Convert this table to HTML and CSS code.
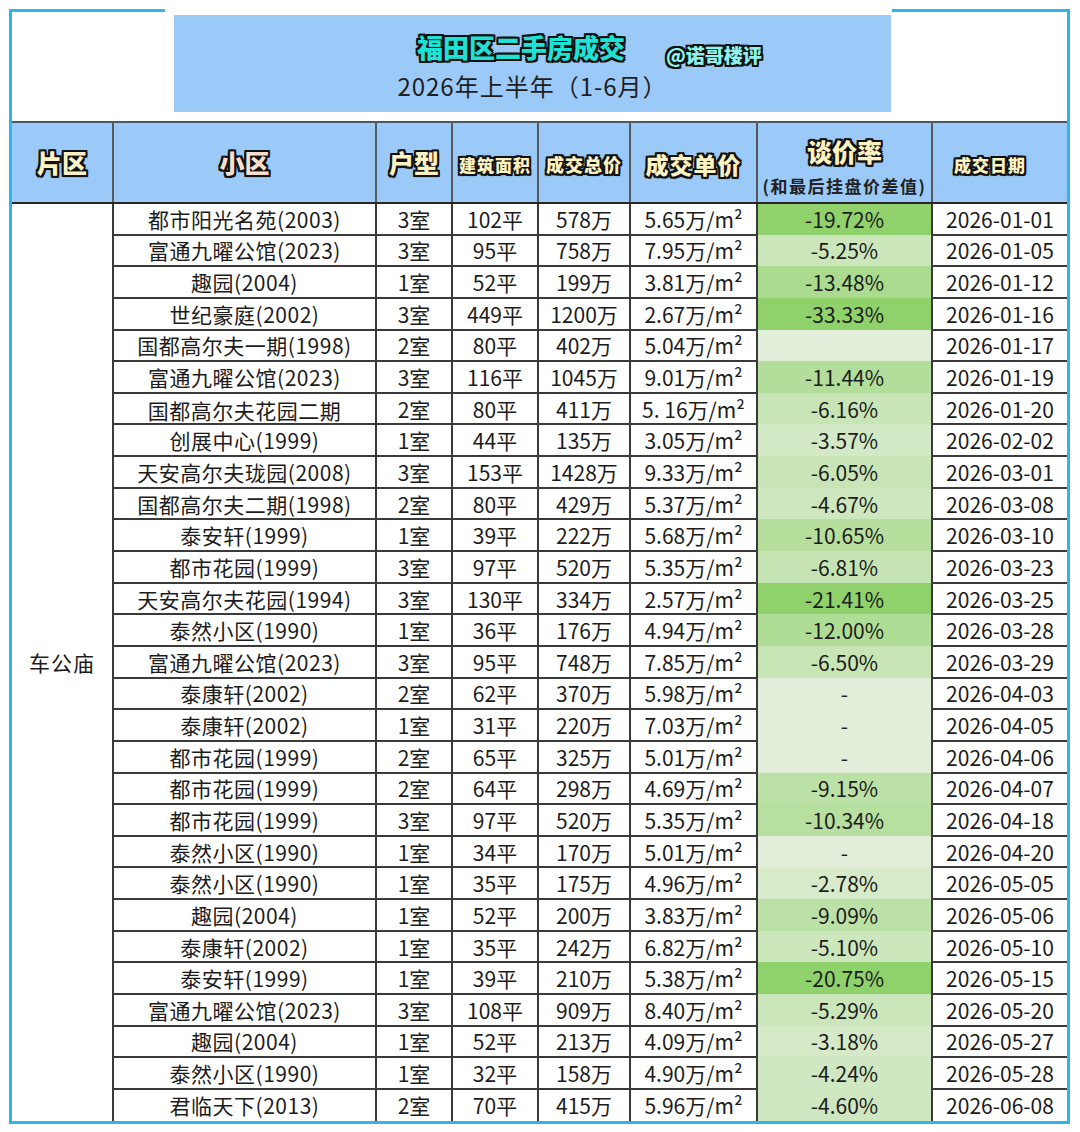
FILE: index.html
```html
<!DOCTYPE html>
<html lang="zh-CN">
<head>
<meta charset="utf-8">
<title>福田区二手房成交</title>
<link rel="stylesheet" href="styles.css">
</head>
<body>
<div class="frame">
  <div class="title-area">
    <div class="title-mask">
      <div class="title-box">
        <div class="title-line">
          <span class="t-main">福田区二手房成交</span>
          <span class="t-handle">@诺哥楼评</span>
        </div>
        <div class="t-sub">2026年上半年（1-6月）</div>
      </div>
    </div>
  </div>
  <table class="deals">
    <colgroup>
      <col class="w-area"><col class="w-name"><col class="w-type"><col class="w-size">
      <col class="w-total"><col class="w-unit"><col class="w-rate"><col class="w-date">
    </colgroup>
    <thead>
      <tr>
        <th class="h h-area"><span class="o yel big">片区</span></th>
        <th class="h h-name"><span class="o peach big">小区</span></th>
        <th class="h h-type"><span class="o yel big">户型</span></th>
        <th class="h h-size"><span class="o yel small">建筑面积</span></th>
        <th class="h h-total"><span class="o yel mid">成交总价</span></th>
        <th class="h h-unit"><span class="o yel unit">成交单价</span></th>
        <th class="h h-rate"><div class="o yel big rate-main">谈价率</div><div class="rate-sub">(和最后挂盘价差值)</div></th>
        <th class="h h-date"><span class="o yel small">成交日期</span></th>
      </tr>
    </thead>
    <tbody>
      <tr><td class="area" rowspan="29">车公庙</td><td class="name">都市阳光名苑(2003)</td><td>3室</td><td>102平</td><td>578万</td><td>5.65万/m²</td><td class="rate" style="background:#90d16c">-19.72%</td><td class="date">2026-01-01</td></tr>
      <tr><td class="name">富通九曜公馆(2023)</td><td>3室</td><td>95平</td><td>758万</td><td>7.95万/m²</td><td class="rate" style="background:#cce6bc">-5.25%</td><td class="date">2026-01-05</td></tr>
      <tr><td class="name">趣园(2004)</td><td>1室</td><td>52平</td><td>199万</td><td>3.81万/m²</td><td class="rate" style="background:#aadb8e">-13.48%</td><td class="date">2026-01-12</td></tr>
      <tr><td class="name">世纪豪庭(2002)</td><td>3室</td><td>449平</td><td>1200万</td><td>2.67万/m²</td><td class="rate" style="background:#8fd16a">-33.33%</td><td class="date">2026-01-16</td></tr>
      <tr><td class="name">国都高尔夫一期(1998)</td><td>2室</td><td>80平</td><td>402万</td><td>5.04万/m²</td><td class="rate" style="background:#e2eed9"></td><td class="date">2026-01-17</td></tr>
      <tr><td class="name">富通九曜公馆(2023)</td><td>3室</td><td>116平</td><td>1045万</td><td>9.01万/m²</td><td class="rate" style="background:#b3dd9a">-11.44%</td><td class="date">2026-01-19</td></tr>
      <tr><td class="name"><div class="clip">国都高尔夫花园二期<br>(1998)</div></td><td>2室</td><td>80平</td><td>411万</td><td>5. 16万/m²</td><td class="rate" style="background:#c8e5b7">-6.16%</td><td class="date">2026-01-20</td></tr>
      <tr><td class="name">创展中心(1999)</td><td>1室</td><td>44平</td><td>135万</td><td>3.05万/m²</td><td class="rate" style="background:#d3e9c5">-3.57%</td><td class="date">2026-02-02</td></tr>
      <tr><td class="name">天安高尔夫珑园(2008)</td><td>3室</td><td>153平</td><td>1428万</td><td>9.33万/m²</td><td class="rate" style="background:#c9e5b7">-6.05%</td><td class="date">2026-03-01</td></tr>
      <tr><td class="name">国都高尔夫二期(1998)</td><td>2室</td><td>80平</td><td>429万</td><td>5.37万/m²</td><td class="rate" style="background:#cfe7bf">-4.67%</td><td class="date">2026-03-08</td></tr>
      <tr><td class="name">泰安轩(1999)</td><td>1室</td><td>39平</td><td>222万</td><td>5.68万/m²</td><td class="rate" style="background:#b6df9e">-10.65%</td><td class="date">2026-03-10</td></tr>
      <tr><td class="name">都市花园(1999)</td><td>3室</td><td>97平</td><td>520万</td><td>5.35万/m²</td><td class="rate" style="background:#c6e4b3">-6.81%</td><td class="date">2026-03-23</td></tr>
      <tr><td class="name">天安高尔夫花园(1994)</td><td>3室</td><td>130平</td><td>334万</td><td>2.57万/m²</td><td class="rate" style="background:#8fd16a">-21.41%</td><td class="date">2026-03-25</td></tr>
      <tr><td class="name">泰然小区(1990)</td><td>1室</td><td>36平</td><td>176万</td><td>4.94万/m²</td><td class="rate" style="background:#b0dd96">-12.00%</td><td class="date">2026-03-28</td></tr>
      <tr><td class="name">富通九曜公馆(2023)</td><td>3室</td><td>95平</td><td>748万</td><td>7.85万/m²</td><td class="rate" style="background:#c7e5b5">-6.50%</td><td class="date">2026-03-29</td></tr>
      <tr><td class="name">泰康轩(2002)</td><td>2室</td><td>62平</td><td>370万</td><td>5.98万/m²</td><td class="rate" style="background:#e2eed9">-</td><td class="date">2026-04-03</td></tr>
      <tr><td class="name">泰康轩(2002)</td><td>1室</td><td>31平</td><td>220万</td><td>7.03万/m²</td><td class="rate" style="background:#e2eed9">-</td><td class="date">2026-04-05</td></tr>
      <tr><td class="name">都市花园(1999)</td><td>2室</td><td>65平</td><td>325万</td><td>5.01万/m²</td><td class="rate" style="background:#e2eed9">-</td><td class="date">2026-04-06</td></tr>
      <tr><td class="name">都市花园(1999)</td><td>2室</td><td>64平</td><td>298万</td><td>4.69万/m²</td><td class="rate" style="background:#bce1a6">-9.15%</td><td class="date">2026-04-07</td></tr>
      <tr><td class="name">都市花园(1999)</td><td>3室</td><td>97平</td><td>520万</td><td>5.35万/m²</td><td class="rate" style="background:#b7dfa0">-10.34%</td><td class="date">2026-04-18</td></tr>
      <tr><td class="name">泰然小区(1990)</td><td>1室</td><td>34平</td><td>170万</td><td>5.01万/m²</td><td class="rate" style="background:#e2eed9">-</td><td class="date">2026-04-20</td></tr>
      <tr><td class="name">泰然小区(1990)</td><td>1室</td><td>35平</td><td>175万</td><td>4.96万/m²</td><td class="rate" style="background:#d7eaca">-2.78%</td><td class="date">2026-05-05</td></tr>
      <tr><td class="name">趣园(2004)</td><td>1室</td><td>52平</td><td>200万</td><td>3.83万/m²</td><td class="rate" style="background:#bce1a7">-9.09%</td><td class="date">2026-05-06</td></tr>
      <tr><td class="name">泰康轩(2002)</td><td>1室</td><td>35平</td><td>242万</td><td>6.82万/m²</td><td class="rate" style="background:#cde7bd">-5.10%</td><td class="date">2026-05-10</td></tr>
      <tr><td class="name">泰安轩(1999)</td><td>1室</td><td>39平</td><td>210万</td><td>5.38万/m²</td><td class="rate" style="background:#8fd16a">-20.75%</td><td class="date">2026-05-15</td></tr>
      <tr><td class="name">富通九曜公馆(2023)</td><td>3室</td><td>108平</td><td>909万</td><td>8.40万/m²</td><td class="rate" style="background:#cce6bc">-5.29%</td><td class="date">2026-05-20</td></tr>
      <tr><td class="name">趣园(2004)</td><td>1室</td><td>52平</td><td>213万</td><td>4.09万/m²</td><td class="rate" style="background:#d5e9c7">-3.18%</td><td class="date">2026-05-27</td></tr>
      <tr><td class="name">泰然小区(1990)</td><td>1室</td><td>32平</td><td>158万</td><td>4.90万/m²</td><td class="rate" style="background:#d0e8c2">-4.24%</td><td class="date">2026-05-28</td></tr>
      <tr class="last"><td class="name">君临天下(2013)</td><td>2室</td><td>70平</td><td>415万</td><td>5.96万/m²</td><td class="rate" style="background:#cfe7c0">-4.60%</td><td class="date">2026-06-08</td></tr>
    </tbody>
  </table>
</div>
</body>
</html>
```

FILE: styles.css
```css
* { box-sizing: border-box; }

body {
  margin: 0;
  background: #ffffff;
  font-family: "Noto Sans CJK SC", "Noto Sans", sans-serif;
  color: #1c1c1c;
}

.frame {
  margin: 9px 0 0 9px;
  width: 1061px;
  border: 3px solid #2fb4ec;
  background: #ffffff;
}

/* ---------- title ---------- */
.title-area {
  display: flex;
  height: 109px;
}

.title-mask {
  margin-left: 153px;
  margin-top: -3px;
  width: 727px;
  height: 112px;
  padding: 6px 0 0 9px;
  background: #ffffff;
}

.title-box {
  width: 717px;
  height: 97px;
  background: #9ccaf8;
  padding-top: 14px;
}

.title-line {
  display: flex;
  align-items: flex-start;
  padding-left: 243px;
  height: 38px;
}

.o {
  font-weight: 900;
  text-shadow:
    -2px -2px 0 #111, 2px -2px 0 #111, -2px 2px 0 #111, 2px 2px 0 #111,
    -2px 0 0 #111, 2px 0 0 #111, 0 -2px 0 #111, 0 2px 0 #111,
    1px 2px 1px #111;
}

.t-main {
  font-size: 26px;
  line-height: 36px;
  color: #1fe2d6;
  font-weight: 900;
  text-shadow:
    -2px -2px 0 #111, 2px -2px 0 #111, -2px 2px 0 #111, 2px 2px 0 #111,
    -2px 0 0 #111, 2px 0 0 #111, 0 -2px 0 #111, 0 2px 0 #111;
}

.t-handle {
  margin-left: 41px;
  padding-top: 11px;
  font-size: 19px;
  line-height: 30px;
  color: #8ff2ec;
  font-weight: 900;
  text-shadow:
    -2px -2px 0 #111, 2px -2px 0 #111, -2px 2px 0 #111, 2px 2px 0 #111,
    -2px 0 0 #111, 2px 0 0 #111, 0 -2px 0 #111, 0 2px 0 #111;
}

.t-sub {
  text-align: center;
  font-size: 24px;
  line-height: 32px;
  letter-spacing: 1px;
  margin-top: 3px;
  color: #1e1e1e;
}

/* ---------- table ---------- */
.deals {
  width: 1055px;
  table-layout: fixed;
  border-collapse: collapse;
}

.w-area { width: 101px; }
.w-name { width: 263px; }
.w-type { width: 76px; }
.w-size { width: 86px; }
.w-total { width: 92px; }
.w-unit { width: 127px; }
.w-rate { width: 175px; }
.w-date { width: 135px; }

.deals th.h {
  height: 81px;
  padding: 0;
  background: #9ccaf8;
  border-top: 2px solid #4c5864;
  border-bottom: 2px solid #262626;
  border-left: 2px solid #555a5f;
  border-right: 2px solid #555a5f;
  text-align: center;
  vertical-align: middle;
  white-space: nowrap;
}

.deals th.h-area { border-left: none; }
.deals th.h-date { border-right: none; padding-right: 20px; padding-top: 4px; }

.yel { color: #fcf2c2; }
.peach { color: #f8dfcb; }

.big { font-size: 25px; line-height: 30px; }
.small { font-size: 17px; line-height: 24px; letter-spacing: 1px; }
.mid { font-size: 18px; line-height: 24px; letter-spacing: 1px; }
.unit { font-size: 23px; line-height: 28px; letter-spacing: 1px; }

.deals th.h-size, .deals th.h-total, .deals th.h-unit { padding-top: 4px; }

.deals th.h-rate {
  vertical-align: top;
  padding-top: 13px;
}

.rate-main { display: block; }

.rate-sub {
  margin-top: 8px;
  font-size: 17px;
  line-height: 24px;
  font-weight: 700;
  letter-spacing: 1.5px;
  color: #222;
}

.deals td {
  height: 31.65px;
  padding: 0;
  border: 2px solid #3a3a3a;
  text-align: center;
  vertical-align: middle;
  font-size: 21px;
  line-height: 24px;
  white-space: nowrap;
  overflow: hidden;
}

.deals td.name { letter-spacing: 0.5px; }

.deals td.area {
  border-left: none;
  border-bottom: none;
  letter-spacing: 1px;
  background: #ffffff;
}

.deals td.rate {
  border-top: none;
  border-bottom: none;
}

.deals td.date { border-right: none; }

.deals tr.last td { border-bottom: none; }

.clip {
  height: 29px;
  overflow: hidden;
  white-space: normal;
  padding-top: 1px;
  line-height: 30px;
}
```
